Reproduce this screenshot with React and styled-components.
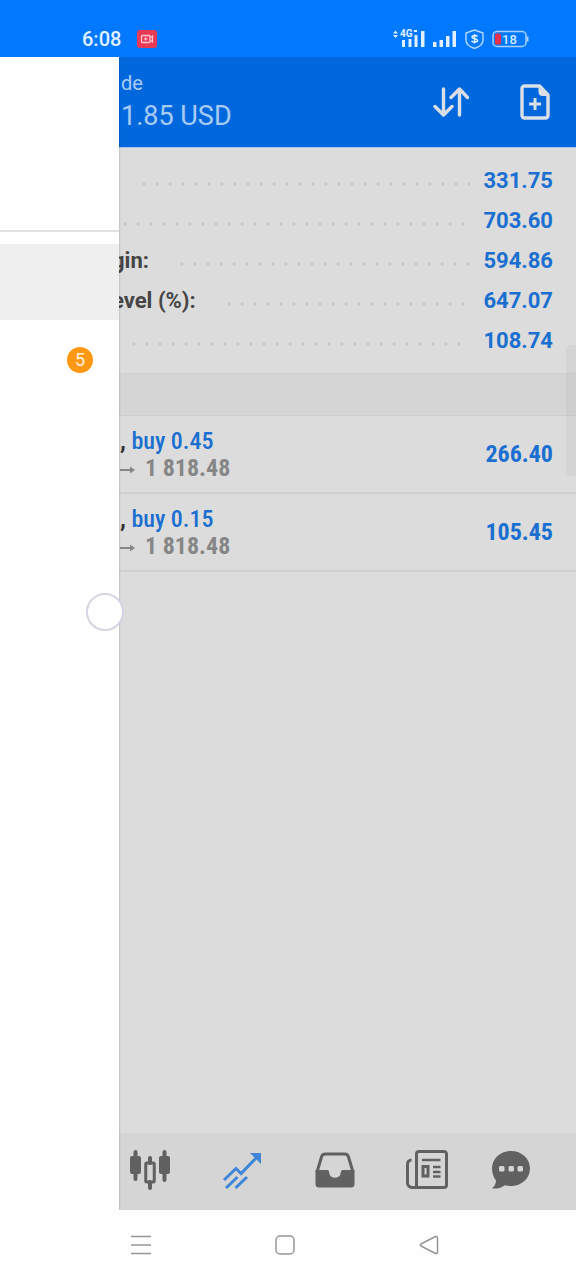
import React from "react";
import styled, { createGlobalStyle } from "styled-components";

const GlobalStyle = createGlobalStyle`
  *, *::before, *::after { box-sizing: border-box; }
  body { margin: 0; background: #fefefe; font-family: Roboto, "Liberation Sans", sans-serif; }
  button { border: 0; padding: 0; background: none; font: inherit; color: inherit; cursor: pointer; }
  svg { display: block; }
`;

const condensed = `"Roboto Condensed", "Liberation Sans Narrow", Roboto, sans-serif`;

const Screen = styled.div`
  display: flex;
  flex-direction: column;
  min-height: 100vh;
`;

const StatusBar = styled.div`
  display: flex;
  align-items: flex-end;
  justify-content: space-between;
  height: 57px;
  padding: 0 47px 7px 82px;
  background: #0079ff;
  color: #e3f0ff;
`;

const StatusGroup = styled.div`
  display: flex;
  align-items: center;
  gap: ${({ $gap }) => $gap}px;
  height: 22px;
`;

const Clock = styled.time`
  font-size: 20px;
  line-height: 22px;
  font-weight: 500;
`;

const AppArea = styled.div`
  position: relative;
  display: flex;
  flex: 1;
  flex-direction: column;
`;

const Header = styled.header`
  display: flex;
  align-items: center;
  justify-content: space-between;
  height: 91px;
  padding: 0 26px 0 121px;
  background: #0068dc;
  border-bottom: 1px solid #a9c3e6;
`;

const Titles = styled.div`
  padding-top: 2px;
  color: #a9cbf3;
`;

const Title = styled.div`
  font-size: 20px;
  line-height: 26px;
`;

const Amount = styled.h1`
  margin: 0;
  font-size: 27px;
  line-height: 40px;
  font-weight: 400;
`;

const HeaderActions = styled.div`
  display: flex;
  align-items: center;
  gap: 51px;
  color: #dadfe6;
`;

const Content = styled.main`
  flex: 1;
  background: #dcdcdc;
`;

const Summary = styled.dl`
  margin: 0;
  padding: 12px 23px 13px 0;
`;

const SummaryRow = styled.div`
  display: flex;
  align-items: center;
  height: 40px;
  font-size: 22px;
  font-weight: 700;
`;

const SummaryLabel = styled.dt`
  flex: none;
  width: ${({ $width }) => $width}px;
  padding-left: 112px;
  color: #454545;
  white-space: nowrap;
`;

const Leader = styled.span`
  flex: 1;
  height: 4px;
  margin: 8px 14px 0 0;
  background: radial-gradient(circle at 2px 2px, #c6c6c6 1px, transparent 2px) 0 0 / 13px 4px repeat-x;
`;

const SummaryValue = styled.dd`
  margin: 0;
  color: #1a6fd0;
`;

const SectionBar = styled.div`
  height: 43px;
  background: #d5d5d5;
  border-top: 1px solid #cecece;
  border-bottom: 1px solid #cfcfcf;
`;

const Positions = styled.ul`
  margin: 0;
  padding: 0;
  list-style: none;
`;

const Position = styled.li`
  display: flex;
  align-items: center;
  justify-content: space-between;
  height: 78px;
  padding: 1px 23px 0 120px;
  border-bottom: 2px solid #cfcfcf;
  font-family: ${condensed};
  font-size: 24px;
  line-height: 27px;
`;

const Order = styled.div`
  color: #333;
  font-weight: 700;
`;

const Side = styled.span`
  color: #1a6fd0;
  font-weight: 500;
`;

const Price = styled.div`
  display: flex;
  align-items: center;
  gap: 9px;
  color: #868686;
  font-weight: 700;
`;

const Profit = styled.div`
  color: #1a6fd0;
  font-weight: 700;
`;

const TabBar = styled.nav`
  display: grid;
  grid-template-columns: repeat(4, 1fr) 76px;
  height: 77px;
  padding: 0 27px 4px 104px;
  background: #d5d5d5;
`;

const Tab = styled.button`
  display: flex;
  align-items: center;
  justify-content: center;
  && { color: ${({ $active }) => ($active ? "#3f86d8" : "#616161")}; }
`;

const Drawer = styled.aside`
  position: absolute;
  inset: 0 auto 0 0;
  width: 119px;
  background: #fefefe;
  box-shadow: 0 0 2px rgba(0, 0, 0, 0.3);
  clip-path: inset(0 -2px 0 0);
`;

const DrawerProfile = styled.div`
  height: 175px;
  margin-bottom: 12px;
  border-bottom: 2px solid #e2e2e2;
`;

const DrawerItem = styled.div`
  display: flex;
  align-items: center;
  justify-content: flex-end;
  height: ${({ $selected }) => ($selected ? 76 : 80)}px;
  padding-right: 26px;
  background: ${({ $selected }) => ($selected ? "#efefef" : "transparent")};
`;

const Badge = styled.span`
  width: 26px;
  height: 26px;
  border-radius: 50%;
  background: #ff9914;
  color: #fff3e0;
  font-size: 18px;
  line-height: 26px;
  text-align: center;
`;

const TouchRing = styled.span`
  position: absolute;
  top: 536px;
  left: 86px;
  width: 38px;
  height: 38px;
  border: 2px solid #d6d3e4;
  border-radius: 50%;
  background: #fefefe;
`;

const EdgeHandle = styled.span`
  position: absolute;
  top: 288px;
  right: 0;
  width: 10px;
  height: 131px;
  border-radius: 5px 0 0 5px;
  background: rgba(120, 120, 120, 0.07);
`;

const SystemNav = styled.nav`
  display: grid;
  grid-template-columns: repeat(3, 1fr);
  height: 70px;
  padding: 0 75px 0 69px;
  background: #fefefe;
`;

const SystemButton = styled.button`
  display: flex;
  align-items: center;
  justify-content: center;
  && { color: #969696; }
`;

const RecordIcon = () => (
  <svg width="20" height="18" viewBox="0 0 20 18" fill="none">
    <rect width="20" height="18" rx="3" fill="#e83a55" />
    <rect x="4.5" y="5.5" width="8.5" height="7" rx="1" stroke="#ffc4cf" strokeWidth="1.3" />
    <path d="M13 8l2.5-2v6L13 10M7 9h3.5M8.700 7.300v3.400" stroke="#ffc4cf" strokeWidth="1.2" />
  </svg>
);

const NetworkIcon = () => (
  <svg width="32" height="20" viewBox="0 0 32 20" fill="currentColor">
    <path d="M0 4.500l2.500-3 2.500 3zM0 6h5L2.500 9z" />
    <text x="7" y="8" fontSize="10" fontWeight="700" fontFamily="Roboto, sans-serif">4G</text>
    <path d="M21 1h3v2h-3z" />
    <path d="M9 11h3v7H9zM15.500 10h3v8h-3zM21.500 6h3v12h-3zM28 2h3.500v16H28z" />
  </svg>
);

const SignalIcon = () => (
  <svg width="24" height="20" viewBox="0 0 24 20" fill="currentColor">
    <path d="M0 13h3.500v5H0zM6.500 11H10v7H6.500zM13 7h3.500v11H13zM19.500 2H23v16h-3.500z" />
  </svg>
);

const ShieldIcon = () => (
  <svg width="19" height="20" viewBox="0 0 19 20" fill="none" stroke="currentColor">
    <path d="M9.500 1L18 4v7c0 4-4 7-8.500 8.500C5 18 1 15 1 11V4z" strokeWidth="1.400" opacity=".8" />
    <path d="M12.500 7.500c-1-1.500-5.500-1.500-5.500.5s5.500 1.500 5.500 3.500-4.500 2-6 .4M9.500 5v9.500" strokeWidth="1.500" />
  </svg>
);

const BatteryIcon = () => (
  <svg width="37" height="18" viewBox="0 0 37 18" fill="none">
    <rect x="1" y="1.500" width="33" height="15" rx="4" stroke="#a9d0ff" strokeWidth="1.500" />
    <path d="M35.500 6.500v5" stroke="#a9d0ff" strokeWidth="2" />
    <rect x="3" y="3.500" width="6" height="11" rx="1.500" fill="#e8304f" />
    <text x="10" y="13.500" fontSize="13" fontWeight="500" fontFamily="Roboto, sans-serif" fill="#d8eaff">18</text>
  </svg>
);

const SortIcon = () => (
  <svg width="36" height="30" viewBox="0 0 36 30" fill="none" stroke="currentColor" strokeWidth="3.400" strokeLinecap="round" strokeLinejoin="round">
    <path d="M10.500 2v26M2 19.500l8.500 8.500 8.500-8.500M26.500 28V2M18 10.500L26.500 2l8 8.500" />
  </svg>
);

const NewOrderIcon = () => (
  <svg width="30" height="36" viewBox="0 0 30 36" fill="none" stroke="currentColor">
    <path d="M4 2h15.500l8.500 9v20.500a2.500 2.500 0 0 1-2.500 2.500H4.500A2.500 2.500 0 0 1 2 31.500V4.500A2.500 2.500 0 0 1 4.500 2z" strokeWidth="3.400" strokeLinejoin="round" />
    <path d="M19 2l9.500 9.500H22a3 3 0 0 1-3-3z" fill="currentColor" />
    <path d="M15 14v12M9 20h12" strokeWidth="3" />
  </svg>
);

const ArrowRight = () => (
  <svg width="16" height="10" viewBox="0 0 16 10" fill="none" stroke="currentColor" strokeWidth="2">
    <path d="M0 7h14" />
    <path d="M10 3.500L15 7l-5 3.500z" fill="currentColor" stroke="none" />
  </svg>
);

const CandlesIcon = () => (
  <svg width="42" height="40" viewBox="0 0 42 40" fill="currentColor">
    <rect x="1" y="6" width="11" height="18" rx="2" />
    <rect x="30" y="6" width="11" height="18" rx="2" />
    <path d="M6.500 2v27M35.500 2v28M21 8v5M21 32v6" stroke="currentColor" strokeWidth="4" strokeLinecap="round" />
    <rect x="16.750" y="13" width="8.500" height="19" rx="1" fill="none" stroke="currentColor" strokeWidth="3" />
  </svg>
);

const TradeIcon = () => (
  <svg width="40" height="38" viewBox="0 0 40 38" fill="none" stroke="currentColor" strokeWidth="3">
    <path d="M2 29L14 17.500l5 5L35 6" />
    <path d="M28 2h11v11z" fill="currentColor" stroke="none" />
    <path d="M4 37l11.500-11M13.500 37L25 26" />
  </svg>
);

const InboxIcon = () => (
  <svg width="40" height="36" viewBox="0 0 40 36" fill="currentColor">
    <path d="M2 20L6.500 5a4 4 0 0 1 4-3h19a4 4 0 0 1 4 3L38 20" fill="none" stroke="currentColor" strokeWidth="3" />
    <path d="M.5 18H12c2 0 2 1.500 2.500 4 1 5 10 5 11 0 .5-2.500.5-4 2.500-4h11.500v14a3.500 3.500 0 0 1-3.500 3.500H4A3.500 3.500 0 0 1 .5 32z" />
  </svg>
);

const NewsIcon = () => (
  <svg width="42" height="40" viewBox="0 0 42 40" fill="none" stroke="currentColor" strokeWidth="3">
    <path d="M10.500 4a2.500 2.500 0 0 1 2.500-2.500h25A2.500 2.500 0 0 1 40.500 4v31a2.500 2.500 0 0 1-2.500 2.500H6A4.500 4.500 0 0 1 1.500 33V14a4 4 0 0 1 4-4M10.500 4v33" />
    <path d="M16 10h18.500M27 17h7.500M27 22h7.500M27 26.500h7.500" strokeWidth="2.500" />
    <rect x="17" y="16.500" width="5" height="9.500" />
  </svg>
);

const ChatIcon = () => (
  <svg width="40" height="40" viewBox="0 0 40 40" fill="currentColor">
    <path d="M20 1C30.500 1 39 8.500 39 18.500S30.500 36 20 36c-2 0-4-.2-6-.8C11 37.500 6 39 1 38.500c2.500-2 4-5 4-8C2.500 27.500 1 23 1 18.500 1 8.500 9.500 1 20 1z" />
    <g fill="#d5d5d5">
      <rect x="8" y="16" width="5.500" height="5.500" rx="1.500" />
      <rect x="17.500" y="16" width="5.500" height="5.500" rx="1.500" />
      <rect x="26.500" y="16" width="5.500" height="5.500" rx="1.500" />
    </g>
  </svg>
);

const summary = [
  { width: 142, label: "", value: "331.75" },
  { width: 123, label: "", value: "703.60" },
  { width: 180, label: "gin:", value: "594.86" },
  { width: 227, label: "evel (%):", value: "647.07" },
  { width: 132, label: "", value: "108.74" },
];

const positions = [
  { side: "buy 0.45", price: "1 818.48", profit: "266.40" },
  { side: "buy 0.15", price: "1 818.48", profit: "105.45" },
];

const tabs = [
  { name: "Charts", Icon: CandlesIcon },
  { name: "Trade", Icon: TradeIcon, active: true },
  { name: "History", Icon: InboxIcon },
  { name: "News", Icon: NewsIcon },
  { name: "Messages", Icon: ChatIcon },
];

export default function App() {
  return (
    <Screen>
      <GlobalStyle />
      <StatusBar>
        <StatusGroup $gap={16}>
          <Clock>6:08</Clock>
          <RecordIcon />
        </StatusGroup>
        <StatusGroup $gap={8}>
          <NetworkIcon />
          <SignalIcon />
          <ShieldIcon />
          <BatteryIcon />
        </StatusGroup>
      </StatusBar>
      <AppArea>
        <Header>
          <Titles>
            <Title>de</Title>
            <Amount>1.85 USD</Amount>
          </Titles>
          <HeaderActions>
            <button type="button" aria-label="Sort"><SortIcon /></button>
            <button type="button" aria-label="New order"><NewOrderIcon /></button>
          </HeaderActions>
        </Header>
        <Content>
          <Summary>
            {summary.map((row) => (
              <SummaryRow key={row.value}>
                <SummaryLabel $width={row.width}>{row.label}</SummaryLabel>
                <Leader />
                <SummaryValue>{row.value}</SummaryValue>
              </SummaryRow>
            ))}
          </Summary>
          <SectionBar />
          <Positions>
            {positions.map((p) => (
              <Position key={p.side}>
                <div>
                  <Order>, <Side>{p.side}</Side></Order>
                  <Price><ArrowRight />{p.price}</Price>
                </div>
                <Profit>{p.profit}</Profit>
              </Position>
            ))}
          </Positions>
        </Content>
        <TabBar>
          {tabs.map(({ name, Icon, active }) => (
            <Tab key={name} type="button" aria-label={name} $active={active}><Icon /></Tab>
          ))}
        </TabBar>
        <EdgeHandle />
        <Drawer>
          <DrawerProfile />
          <DrawerItem $selected />
          <DrawerItem><Badge>5</Badge></DrawerItem>
        </Drawer>
        <TouchRing />
      </AppArea>
      <SystemNav>
        <SystemButton type="button" aria-label="Menu">
          <svg width="20" height="20" viewBox="0 0 20 20" stroke="currentColor" strokeWidth="1.500">
            <path d="M0 1.500h20M0 10h20M0 18.500h20" />
          </svg>
        </SystemButton>
        <SystemButton type="button" aria-label="Home">
          <svg width="20" height="20" viewBox="0 0 20 20" fill="none" stroke="currentColor" strokeWidth="1.500">
            <rect x="1" y="1" width="18" height="18" rx="4" />
          </svg>
        </SystemButton>
        <SystemButton type="button" aria-label="Back">
          <svg width="20" height="20" viewBox="0 0 20 20" fill="none" stroke="currentColor" strokeWidth="1.500" strokeLinejoin="round">
            <path d="M2 9L16.500 1.500Q18.500 1 18.500 3v14q0 2-2 1.500L2 11q-1.500-1 0-2z" />
          </svg>
        </SystemButton>
      </SystemNav>
    </Screen>
  );
}
